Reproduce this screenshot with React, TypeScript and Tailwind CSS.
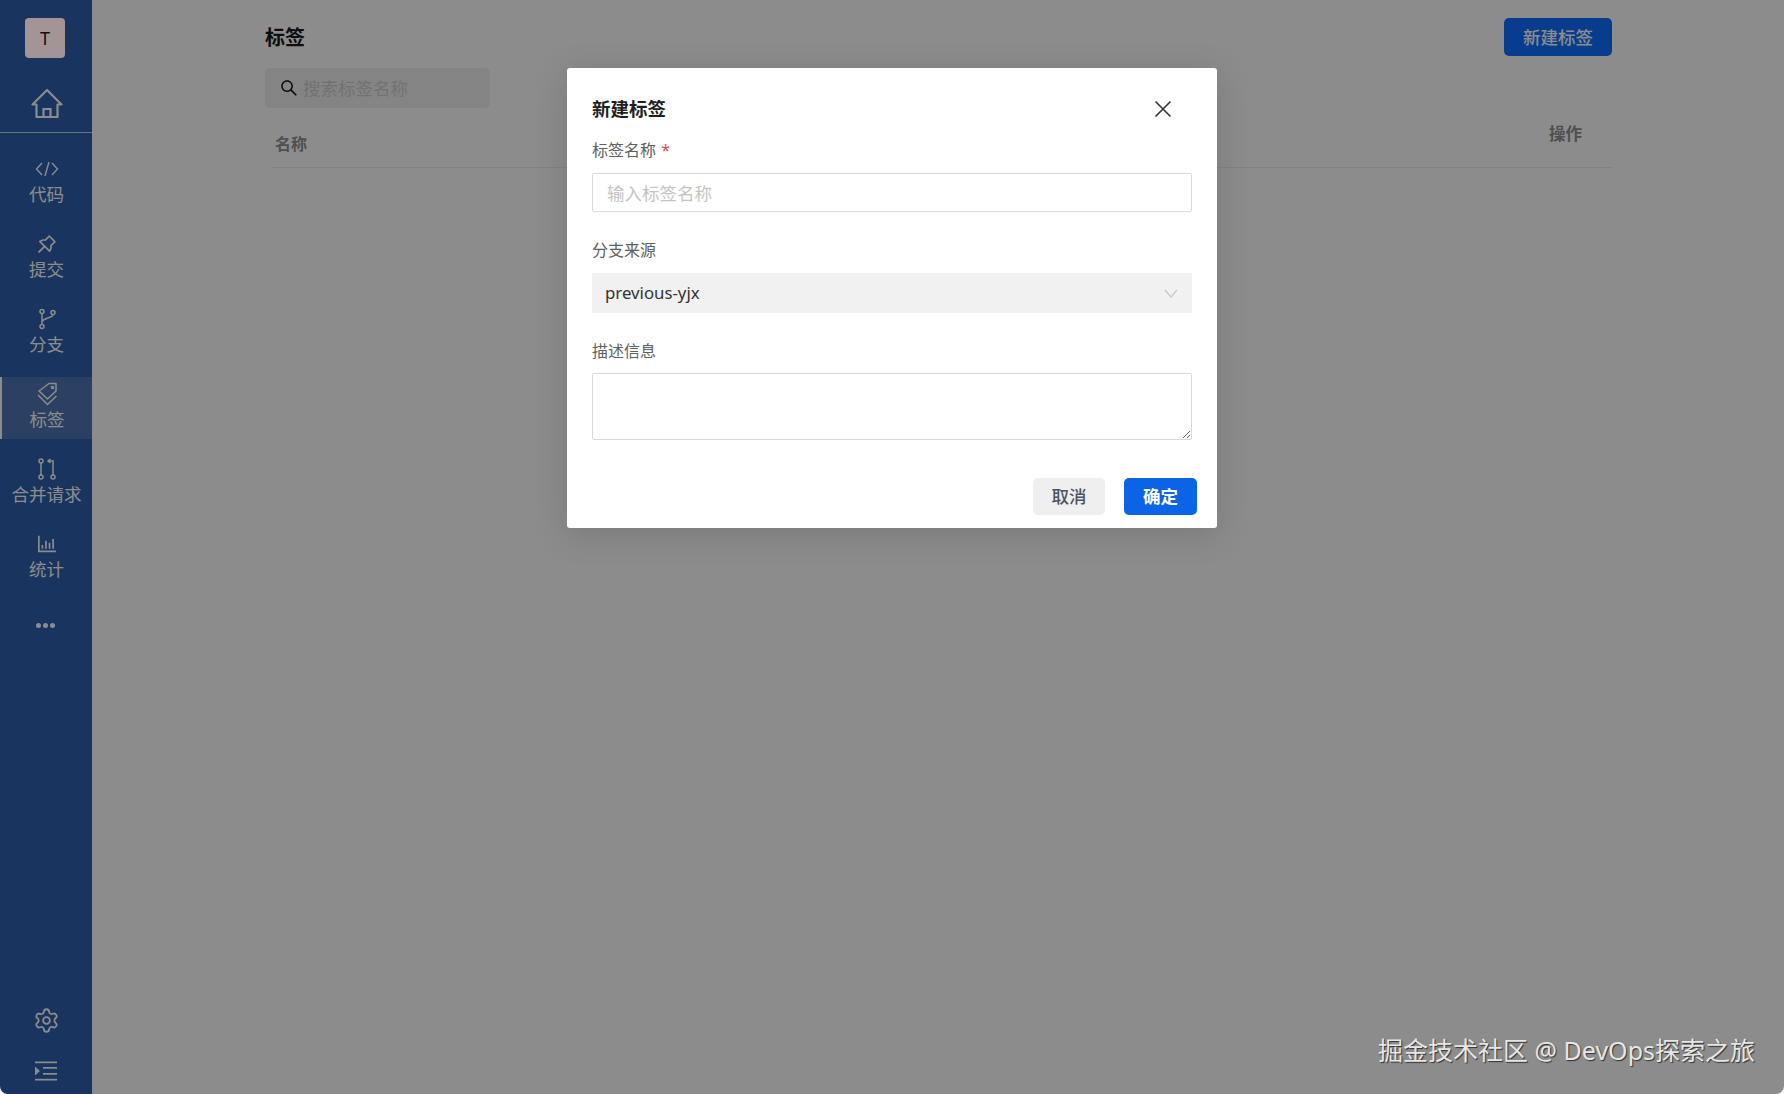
import React from "react";
import { AiOutlineBarChart, AiOutlineSearch, AiOutlinePushpin } from "react-icons/ai";
import { Settings } from "lucide-react";

// ─── Sidebar icons ───────────────────────────────────────────────────────────

const HomeIcon = () => (
  <svg width="32" height="32" viewBox="0 0 32 32" fill="none" stroke="currentColor" strokeWidth="2.2">
    <path d="M1.5 16.5 16 2l14.5 14.5H26.5V29H5.5V16.5H1.5Z" strokeLinejoin="round" />
    <path d="M12.5 29v-8h7v8" />
  </svg>
);

const CodeIcon = () => (
  <svg width="24" height="16" viewBox="0 0 24 16" fill="none" stroke="currentColor" strokeWidth="1.4">
    <path d="M7 2 1.5 8 7 14M17 2l5.5 6-5.5 6M14 1l-4 14" />
  </svg>
);

const BranchIcon = () => (
  <svg width="22" height="22" viewBox="0 0 22 22" fill="none" stroke="currentColor" strokeWidth="1.5">
    <circle cx="6" cy="3.5" r="2" />
    <circle cx="6" cy="18.5" r="2" />
    <circle cx="17" cy="4.5" r="2" />
    <path d="M6 5.5v11M17 6.5c0 4-11 3-11 8" />
  </svg>
);

const TagIcon = () => (
  <svg width="22" height="24" viewBox="0 0 22 24" fill="none" stroke="currentColor" strokeWidth="1.5">
    <path d="M13 1.5h7v7.5l-8.5 8L3 9l10-7.5Z" strokeLinejoin="round" />
    <circle cx="16.5" cy="5.5" r="1" />
    <path d="M2 13l9.5 9.5 9-8.5" />
  </svg>
);

const PullIcon = () => (
  <svg width="22" height="22" viewBox="0 0 22 22" fill="none" stroke="currentColor" strokeWidth="1.5">
    <circle cx="5" cy="3" r="2" />
    <circle cx="5" cy="19" r="2" />
    <circle cx="17" cy="19" r="2" />
    <path d="M5 5v12M17 17V3h-5M14.5 1 12 3l2.5 2" />
  </svg>
);

const CollapseIcon = () => (
  <svg width="24" height="20" viewBox="0 0 24 20" fill="currentColor">
    <rect x="1" y="0.5" width="22" height="1.7" />
    <rect x="9" y="6" width="14" height="1.7" />
    <rect x="9" y="12" width="14" height="1.7" />
    <rect x="1" y="17.8" width="22" height="1.7" />
    <path d="M1 5.5 6 10l-5 4.5v-9Z" />
  </svg>
);

const NAV = [
  { label: "代码", icon: <CodeIcon />, active: false },
  { label: "提交", icon: <AiOutlinePushpin size={24} />, active: false },
  { label: "分支", icon: <BranchIcon />, active: false },
  { label: "标签", icon: <TagIcon />, active: true },
  { label: "合并请求", icon: <PullIcon />, active: false },
  { label: "统计", icon: <AiOutlineBarChart size={24} />, active: false },
];

const Sidebar = () => (
  <aside className="flex h-full w-[92px] shrink-0 flex-col bg-[#2e5fad] text-white">
    <div className="flex h-[133px] flex-col items-center border-b border-[#fff]/70 pt-[18px]">
      <div className="relative z-10 mr-[2px] flex h-10 w-10 items-center justify-center rounded-[4px] bg-[#a39496] text-[18px] text-[#111]">
        T
      </div>
      <div className="ml-[1px] mt-[30px] flex justify-center">
        <HomeIcon />
      </div>
    </div>

    <nav className="mt-[19px] flex flex-col gap-[13px]">
      {NAV.map((item) => (
        <div
          key={item.label}
          className={`flex h-[62px] flex-col items-center pl-[1px] pt-[5px] ${
            item.active ? "border-l-2 border-white bg-[#4f76b5] pl-0 pr-[1px]" : ""
          }`}
        >
          <div className="flex h-[24px] items-center justify-center">{item.icon}</div>
          <span className="mt-[1px] text-[17.5px] leading-[24px]">{item.label}</span>
        </div>
      ))}
    </nav>

    <div className="mt-[34px] flex justify-center gap-[2px] pr-[2px]">
      <span className="h-[5px] w-[5px] rounded-full bg-white" />
      <span className="h-[5px] w-[5px] rounded-full bg-white" />
      <span className="h-[5px] w-[5px] rounded-full bg-white" />
    </div>

    <div className="mt-auto flex flex-col items-center gap-[27px] pb-[13px]">
      <Settings size={27} strokeWidth={1.6} />
      <CollapseIcon />
    </div>
  </aside>
);

// ─── Page under the dialog ───────────────────────────────────────────────────

const TagsPage = () => (
  <main className="flex-1 pl-[173px] pr-[172px]">
    <div className="flex h-[68px] items-start justify-between pt-[18px]">
      <h1 className="mt-[1px] text-[20px] leading-[38px] font-semibold text-[#1a1a1a]">标签</h1>
      <button className="h-[38px] w-[108px] rounded-[5px] bg-[#0e6fff] text-[17.5px] font-medium text-white">
        新建标签
      </button>
    </div>
    <div className="flex h-10 w-[225px] items-center rounded-[5px] bg-[#f0f0f0] pl-[14px]">
      <AiOutlineSearch size={20} className="text-[#111]" />
      <span className="ml-[4px] text-[17.5px] text-[#d0d0d0]">搜索标签名称</span>
    </div>
    <div className="ml-[6px] mt-[14px] flex h-[46px] items-start justify-between border-b border-[#efefef] pl-[4px] pr-[30px]">
      <span className="mt-[10px] text-[16px] font-semibold text-[#909090]">名称</span>
      <span className="text-[16.5px] font-semibold text-[#909090]">操作</span>
    </div>
  </main>
);

// ─── Dialog ──────────────────────────────────────────────────────────────────

const Label = ({ children }: { children: React.ReactNode }) => (
  <div className="text-[16px] leading-[24px] text-[#606060]">{children}</div>
);

const NewTagDialog = () => (
  <div className="mx-auto mt-[68px] h-[460px] w-[650px] rounded-[3px] bg-white pl-[25px] pr-[25px] pt-[28px] shadow-[0_6px_36px_rgba(0,0,0,0.14)]">
    <div className="flex h-[26px] items-center justify-between">
      <h2 className="text-[18.5px] font-semibold text-[#1f1f1f]">新建标签</h2>
      <svg className="mr-[20px]" width="18" height="18" viewBox="0 0 18 18" stroke="#333" strokeWidth="1.6">
        <path d="M1.5 1.5l15 15M16.5 1.5l-15 15" />
      </svg>
    </div>

    <div className="mt-[16px]">
      <Label>
        标签名称 <span className="ml-[1px] text-[#e5484d]">*</span>
      </Label>
      <input
        placeholder="输入标签名称"
        className="mt-[11px] h-[39px] w-full rounded-[2px] border border-[#d9d9d9] px-[14px] text-[17.5px] outline-none placeholder:text-[#c4c4c4]"
      />
    </div>

    <div className="mt-[26px]">
      <Label>分支来源</Label>
      <div className="mt-[11px] flex h-10 w-full items-center justify-between bg-[#f1f1f1] pl-[13px] pr-[14px]">
        <span className="text-[16.8px] text-[#333]">previous-yjx</span>
        <svg width="14" height="9" viewBox="0 0 14 9" fill="none" stroke="#c8c8c8" strokeWidth="1.2">
          <path d="M1 1l6 7 6-7" />
        </svg>
      </div>
    </div>

    <div className="mt-[26px]">
      <Label>描述信息</Label>
      <textarea className="mt-[10px] block h-[67px] w-full rounded-[2px] border border-[#d9d9d9] outline-none" />
    </div>

    <div className="-mr-[5px] mt-[38px] flex justify-end gap-[19px]">
      <button className="h-[37px] w-[72px] rounded-[5px] bg-[#efefef] text-[17.5px] font-medium text-[#4a5563]">
        取消
      </button>
      <button className="h-[37px] w-[73px] rounded-[5px] bg-[#0b63e5] text-[17.5px] font-semibold text-white">
        确定
      </button>
    </div>
  </div>
);

export default function App() {
  return (
    <div className="relative flex h-[1094px] w-[1784px] overflow-hidden rounded-b-[8px] bg-white font-['Noto_Sans','Noto_Sans_CJK_SC',sans-serif]">
      <Sidebar />
      <TagsPage />
      {/* Modal mask over the whole page */}
      <div className="absolute inset-0 bg-black/45">
        <NewTagDialog />
      </div>
      <div className="absolute bottom-[26px] right-[29px] text-[25px] leading-[36px] text-[#e6e6e6] [text-shadow:1px_1px_1px_rgba(0,0,0,0.65)]">
        掘金技术社区 @ DevOps探索之旅
      </div>
    </div>
  );
}
